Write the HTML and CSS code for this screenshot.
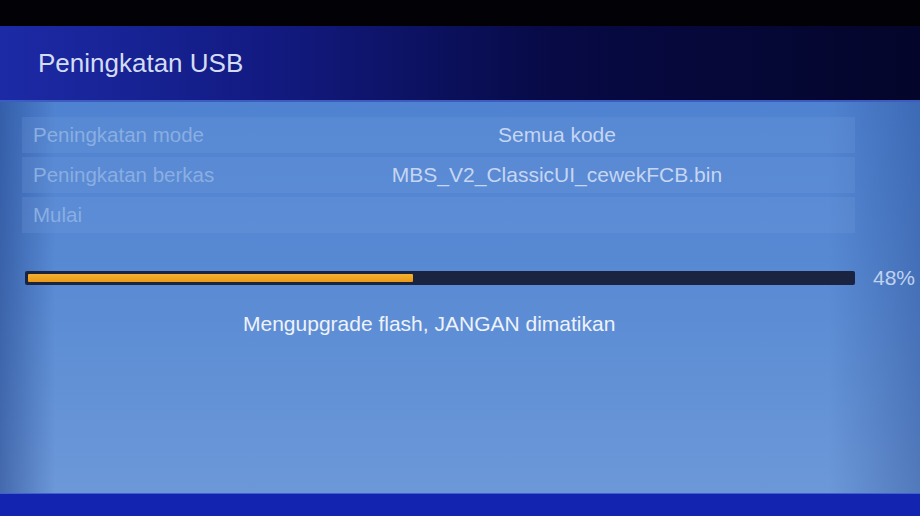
FILE: index.html
```html
<!DOCTYPE html>
<html>
<head>
<meta charset="utf-8">
<link rel="stylesheet" href="styles.css">
</head>
<body>
<div class="screen">
  <div class="topblack"></div>
  <header class="header"><h1 class="title">Peningkatan USB</h1></header>
  <main class="content">
    <div class="rows">
      <div class="row"><span class="label">Peningkatan mode</span><span class="value">Semua kode</span></div>
      <div class="row"><span class="label">Peningkatan berkas</span><span class="value">MBS_V2_ClassicUI_cewekFCB.bin</span></div>
      <div class="row"><span class="label">Mulai</span><span class="value"></span></div>
    </div>
    <div class="progress">
      <div class="track"><div class="fill" style="width:46.7%"></div></div>
      <span class="pct">48%</span>
    </div>
    <p class="message">Mengupgrade flash, JANGAN dimatikan</p>
  </main>
  <footer class="bottom"></footer>
</div>
</body>
</html>
```
FILE: styles.css
```css
html, body {
  margin: 0;
  padding: 0;
  background: #000;
}
.screen {
  width: 920px;
  height: 516px;
  display: flex;
  flex-direction: column;
  font-family: "Liberation Sans", Arial, sans-serif;
  overflow: hidden;
}
.topblack {
  height: 26px;
  background: #020206;
  flex: none;
}
.header {
  height: 74px;
  flex: none;
  background: linear-gradient(90deg, #1c2aa6 0%, #121a80 30%, #070a45 60%, #04052a 100%);
  display: flex;
  align-items: center;
  padding-left: 38px;
  border-bottom: 2px solid #3c5cc0;
}
.title {
  margin: 0;
  font-size: 26px;
  font-weight: normal;
  color: #d4dcf2;
}
.content {
  flex: 1;
  background:
    linear-gradient(90deg, rgba(20,50,120,0.45) 0%, rgba(20,50,120,0) 6%, rgba(20,50,120,0) 90%, rgba(20,50,120,0.3) 100%),
    linear-gradient(180deg, #4f82d0 0%, #5789d3 40%, #6c98d8 100%);
  padding: 15px 0 0 0;
  display: flex;
  flex-direction: column;
}
.rows {
  margin-left: 22px;
  width: 833px;
  display: flex;
  flex-direction: column;
  gap: 4px;
}
.row {
  height: 36px;
  display: grid;
  grid-template-columns: 260px 550px;
  align-items: center;
  background: rgba(120, 160, 225, 0.22);
}
.label {
  padding-left: 11px;
  font-size: 20.5px;
  color: #8aaee2;
}
.value {
  text-align: center;
  font-size: 21px;
  color: #c6d6f2;
}
.progress {
  margin-top: 33px;
  display: flex;
  align-items: center;
  padding-left: 25px;
}
.track {
  width: 824px;
  height: 8px;
  padding: 3px;
  background: #1a2440;
  border-radius: 2px;
  flex: none;
}
.fill {
  height: 100%;
  background: linear-gradient(180deg, #f6b030, #e89a18);
  border-radius: 1px;
}
.pct {
  margin-left: 18px;
  font-size: 21px;
  color: #c0d2ee;
}
.message {
  margin: 22px 0 0 243px;
  font-size: 21px;
  color: #eef2fa;
}
.bottom {
  height: 22px;
  flex: none;
  background: #1224b0;
  border-top: 1px solid #4060d0;
}
```
